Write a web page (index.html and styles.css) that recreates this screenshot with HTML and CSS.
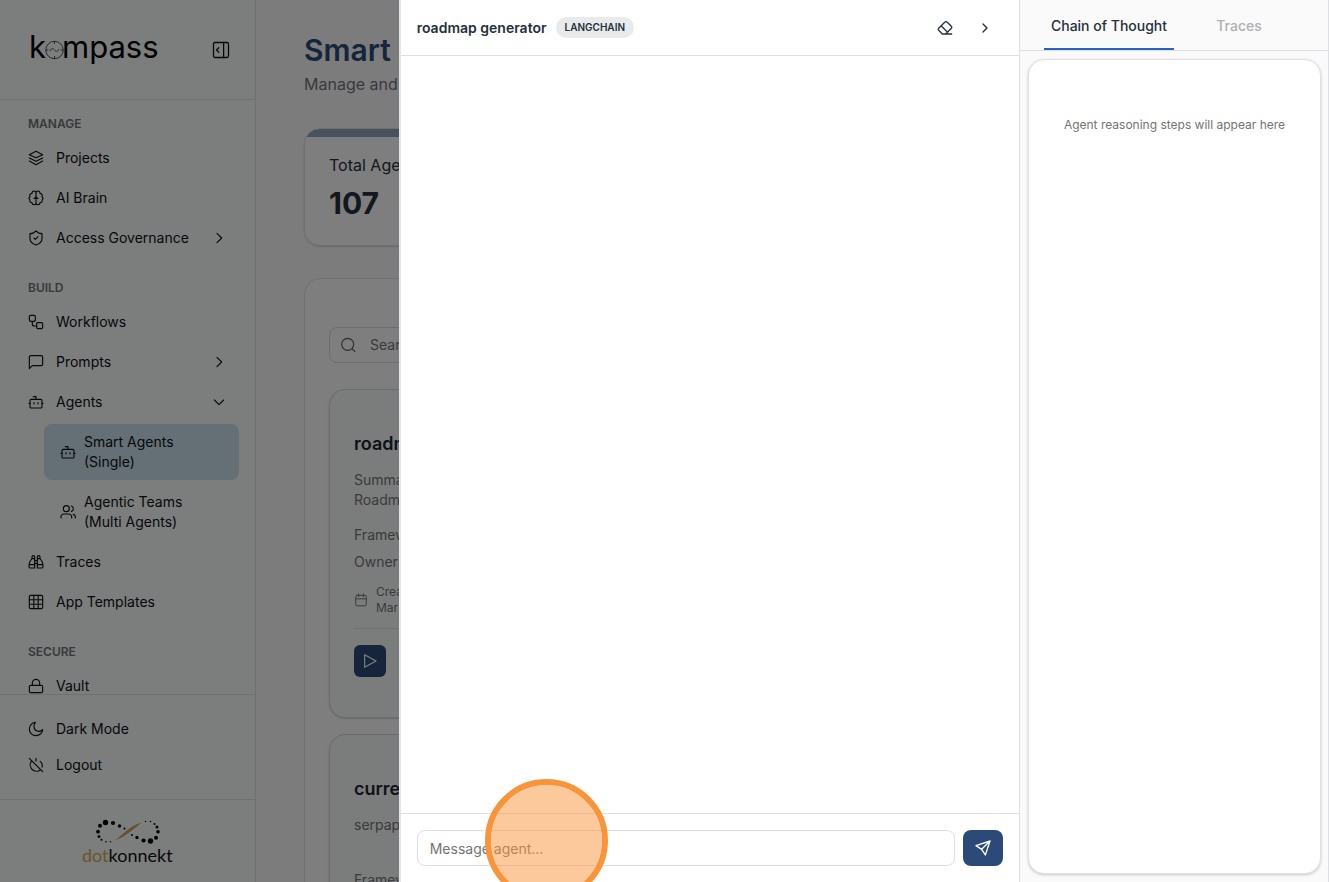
FILE: index.html
```html
<!DOCTYPE html>
<html lang="en">
<head>
<meta charset="utf-8">
<meta name="viewport" content="width=device-width, initial-scale=1">
<title>Kompass – Smart Agents</title>
<link rel="stylesheet" href="styles.css">
</head>
<body>
<div class="app">
  <aside class="sidebar">
    <header class="brand">
      <svg class="brand-logo" width="134" height="44" viewBox="0 0 134 44" role="img" aria-label="kompass">
        <text class="brand-text" x="1" y="30">k</text>
        <text class="brand-text" x="34" y="30">mpass</text>
        <g class="compass">
          <circle cx="26.500" cy="22" r="8.700"/>
          <path d="M26.500 13v3M26.500 28v3M17.500 22h3M32.500 22h3M22 23c1-3 3-3 4.500-1s3 2 4.500-1"/>
        </g>
      </svg>
      <button class="icon-btn collapse" aria-label="Collapse sidebar">
        <svg class="icon icon-lg" viewBox="0 0 24 24"><rect x="2" y="2" width="20" height="20" rx="2"/><path d="M15.500 2v20M9 9l-3 3 3 3"/></svg>
      </button>
    </header>
    <nav class="nav">
      <section class="group">
        <h2 class="group-title">MANAGE</h2>
        <a class="item" href="#"><svg class="icon" viewBox="0 0 24 24"><path d="M12 2 22 7 12 11.500 2 7zM2 12l10 5 10-5M2 16.500l10 5.500 10-5.500"/></svg>Projects</a>
        <a class="item" href="#"><svg class="icon" viewBox="0 0 24 24"><path d="M12 4.500v15M12 4.500C12 .5 6 .5 6 5c-3 .5-4 3-3 5-2 1-2 4 0 5-1 3 1 4 3 4 0 4 6 4 6 .5M12 4.500C12 .5 18 .5 18 5c3 .5 4 3 3 5 2 1 2 4 0 5 1 3-1 4-3 4 0 4-6 4-6 .5M9 12.500c2 0 3-1 3-3M15 12.500c-2 0-3-1-3-3"/></svg>AI Brain</a>
        <a class="item" href="#"><svg class="icon" viewBox="0 0 24 24"><path d="M21 13c0 5-3.500 7.500-9 9.500C6.500 20.500 3 18 3 13V5.500c4 0 6.500-1.500 9-4 2.500 2.500 5 4 9 4zM9 12l2 2 4-4"/></svg>Access Governance<svg class="icon chevron" viewBox="0 0 24 24"><path d="m9 5 7 7-7 7"/></svg></a>
      </section>
      <section class="group">
        <h2 class="group-title">BUILD</h2>
        <a class="item" href="#"><svg class="icon" viewBox="0 0 24 24"><rect x="2" y="2" width="9" height="9" rx="2"/><rect x="13" y="13" width="9" height="9" rx="2"/><path d="M6.500 11v4c0 2 1 3 3 3H13"/></svg>Workflows</a>
        <a class="item" href="#"><svg class="icon" viewBox="0 0 24 24"><path d="M22 15.500a2 2 0 0 1-2 2H6.500L2 22V4.500a2 2 0 0 1 2-2h16a2 2 0 0 1 2 2z"/></svg>Prompts<svg class="icon chevron" viewBox="0 0 24 24"><path d="m9 5 7 7-7 7"/></svg></a>
        <a class="item" href="#"><svg class="icon" viewBox="0 0 24 24"><path d="M12 8V4H8M3 14H1.500M22.500 14H21M9 13v2M15 13v2"/><rect x="3" y="8" width="18" height="13" rx="2"/></svg>Agents<svg class="icon chevron" viewBox="0 0 24 24"><path d="m5 9 7 7 7-7"/></svg></a>
        <div class="subnav">
          <a class="item sub active" href="#"><svg class="icon" viewBox="0 0 24 24"><path d="M12 8V4H8M3 14H1.500M22.500 14H21M9 13v2M15 13v2"/><rect x="3" y="8" width="18" height="13" rx="2"/></svg><span>Smart Agents (Single)</span></a>
          <a class="item sub" href="#"><svg class="icon" viewBox="0 0 24 24"><circle cx="9.500" cy="7" r="4.500"/><path d="M1.500 21v-1.500c0-3 2-4.500 5-4.500h6c3 0 5 1.500 5 4.500V21M17 3c4 1 4 7 0 8M20 15.500c2 .5 3 2 3 4V21"/></svg><span>Agentic Teams (Multi Agents)</span></a>
        </div>
        <a class="item" href="#"><svg class="icon" viewBox="0 0 24 24"><path d="M10 10h4M10 14h4M10 21V4.500a2 2 0 0 0-4 0V7c-3 3-4.500 7-4.500 12a2 2 0 0 0 2 2zM14 21V4.500a2 2 0 0 1 4 0V7c3 3 4.500 7 4.500 12a2 2 0 0 1-2 2zM1.500 16H10M14 16h8.500M6 7h4M14 7h4"/></svg>Traces</a>
        <a class="item" href="#"><svg class="icon" viewBox="0 0 24 24"><rect x="2" y="2" width="20" height="20" rx="2"/><path d="M2 8.700h20M2 15.300h20M8.700 2v20M15.300 2v20"/></svg>App Templates</a>
      </section>
      <section class="group">
        <h2 class="group-title">SECURE</h2>
        <a class="item" href="#"><svg class="icon" viewBox="0 0 24 24"><rect x="2" y="11" width="20" height="11" rx="2"/><path d="M6.500 11V7.500a5.500 5.500 0 0 1 11 0V11"/></svg>Vault</a>
      </section>
    </nav>
    <div class="account">
      <button class="item"><svg class="icon" viewBox="0 0 24 24"><path d="M11 2C5.500 2.500 2 7 2 12c0 6 4.500 10 10 10 5 0 9.500-3.500 10-9-1.500 2-3.500 2.500-5 2.500-5 0-8-3-8-7.500 0-2.500 1-4.500 2-6z"/></svg>Dark Mode</button>
      <button class="item"><svg class="icon" viewBox="0 0 24 24"><path d="M18.400 6.600a9 9 0 0 1 2.800 8.500M12 2v4M2 2l20 20M5 6.500A9.500 9.500 0 0 0 18.500 19.500"/></svg>Logout</button>
    </div>
    <footer class="vendor">
      <svg width="94" height="48" viewBox="0 0 94 48" role="img" aria-label="dotkonnekt">
        <g fill="#000">
          <circle cx="24.500" cy="6.500" r="2.700"/><circle cx="32" cy="7" r="2.100"/><circle cx="38.500" cy="10" r="1.700"/><circle cx="43.500" cy="12.500" r="1"/>
          <circle cx="19" cy="9.700" r="2"/><circle cx="17" cy="15.700" r="1.900"/><circle cx="18" cy="20.500" r="1.500"/><circle cx="20.500" cy="23.700" r="1"/><circle cx="25" cy="25.700" r=".8"/><circle cx="29.500" cy="25.700" r=".7"/>
          <circle cx="51" cy="19" r="1"/><circle cx="56" cy="21.500" r="1.700"/><circle cx="62.500" cy="24.500" r="2.100"/><circle cx="69.500" cy="25" r="2.700"/><circle cx="75" cy="21.800" r="2"/><circle cx="77" cy="15.700" r="1.800"/><circle cx="76" cy="11" r="1.500"/><circle cx="73.500" cy="8" r="1"/><circle cx="69.500" cy="5.500" r=".8"/><circle cx="64.500" cy="5.500" r=".7"/>
        </g>
        <path d="M34 24.500C42 18.500 49 9.500 60.500 6.500 55 11 45 20.500 34 24.500z" fill="#d2a04c"/>
        <text class="vendor-text" x="1" y="46"><tspan fill="#d5aa49">dot</tspan><tspan fill="#111">konnekt</tspan></text>
      </svg>
    </footer>
  </aside>

  <main class="main">
    <h1 class="page-title">Smart Agents</h1>
    <p class="page-sub">Manage and</p>
    <section class="stat">
      <p class="stat-label">Total Agents</p>
      <p class="stat-value">107</p>
    </section>
    <section class="panel">
      <label class="search">
        <svg class="icon" viewBox="0 0 24 24"><circle cx="11.500" cy="11" r="9"/><path d="m18.500 18 4 4"/></svg>
        <input type="search" placeholder="Search" aria-label="Search agents">
      </label>
      <div class="cards">
        <article class="card">
          <h3 class="card-title">roadmap generator</h3>
          <p class="card-desc">Summary<br>Roadmap</p>
          <p class="card-meta">Framework:</p>
          <p class="card-meta">Owner:</p>
          <div class="card-date"><svg class="icon" viewBox="0 0 24 24"><rect x="3" y="4" width="18" height="18" rx="2"/><path d="M8 1.500v5M16 1.500v5M3 10h18"/></svg><span>Created<br>Mar</span></div>
          <div class="card-actions"><button class="play" aria-label="Run agent"><svg class="icon" viewBox="0 0 24 24"><path d="M4 2.500v19L21 12z"/></svg></button></div>
        </article>
        <article class="card">
          <h3 class="card-title">current</h3>
          <p class="card-desc">serpapi</p>
          <p class="card-meta">Framework:</p>
        </article>
      </div>
    </section>
  </main>
</div>

<div class="scrim"></div>

<div class="drawer" role="dialog" aria-label="roadmap generator">
  <section class="chat">
    <header class="chat-head">
      <h2 class="chat-title">roadmap generator</h2>
      <span class="badge">LANGCHAIN</span>
      <div class="chat-tools">
        <button class="icon-btn" aria-label="Clear chat"><svg class="icon" viewBox="0 0 24 24"><path d="M8 21 2.500 15.500a2 2 0 0 1 0-3L12 3a2 2 0 0 1 3 0l6.500 6.500a2 2 0 0 1 0 3L13 21M22 21H8M6.500 9l9 9"/></svg></button>
        <button class="icon-btn" aria-label="Collapse panel"><svg class="icon" viewBox="0 0 24 24"><path d="m9 6 6 6-6 6"/></svg></button>
      </div>
    </header>
    <div class="messages"></div>
    <form class="composer">
      <input class="message" type="text" placeholder="Message agent..." aria-label="Message agent">
      <button class="send" type="button" aria-label="Send"><svg class="icon" viewBox="0 0 24 24"><path d="M22.500 1.500 1.500 8.500l8.500 5.500 5.500 8.500zM22.500 1.500 10 14"/></svg></button>
    </form>
  </section>
  <aside class="thoughts">
    <div class="tabs" role="tablist">
      <button class="tab selected" role="tab" aria-selected="true">Chain of Thought</button>
      <button class="tab" role="tab" aria-selected="false">Traces</button>
    </div>
    <div class="thoughts-body"><div class="steps">Agent reasoning steps will appear here</div></div>
  </aside>
</div>
<div class="click-marker"></div>
</body>
</html>
```
FILE: styles.css
```css
* { box-sizing: border-box; }
body, h1, h2, h3, p { margin: 0; }
html, body { height: 100%; }
body {
  font: 14px/20px Inter, "Liberation Sans", sans-serif;
  color: #0c1013;
  overflow: hidden;
}
button, input { font: inherit; color: inherit; }
button { border: 0; background: none; padding: 0; cursor: pointer; }
a { color: inherit; text-decoration: none; }

.icon {
  width: 16px;
  height: 16px;
  flex: none;
  fill: none;
  stroke: currentColor;
  stroke-width: 1.7;
  stroke-linecap: round;
  stroke-linejoin: round;
}
.icon-lg { width: 18px; height: 18px; }
.icon-btn { display: grid; place-items: center; width: 32px; height: 32px; }

.app { display: flex; height: 100vh; background: #fff; }

.sidebar {
  display: flex;
  flex-direction: column;
  width: 256px;
  flex: none;
  background: #f8fbfa;
  border-right: 1px solid #dce2e4;
}
.brand {
  display: flex;
  align-items: center;
  justify-content: space-between;
  height: 100px;
  flex: none;
  padding: 0 18px 0 28px;
  border-bottom: 1px solid #dce2e4;
}
.brand-text { font-size: 31px; fill: #000; }
.compass { fill: none; stroke: #555; stroke-width: 1; }

.nav {
  flex: 1;
  min-height: 0;
  overflow: hidden;
  display: flex;
  flex-direction: column;
  gap: 24px;
  padding: 16px;
}
.group { display: flex; flex-direction: column; gap: 4px; flex: none; }
.group-title {
  padding: 0 12px 4px;
  font-size: 12px;
  line-height: 16px;
  font-weight: 600;
  color: #6f7376;
}
.item {
  display: flex;
  align-items: center;
  gap: 12px;
  width: 100%;
  padding: 8px 12px;
  border-radius: 8px;
  text-align: left;
}
.chevron { margin-left: auto; }
.subnav { display: flex; flex-direction: column; gap: 4px; margin-left: 28px; }
.sub { gap: 8px; padding: 8px 48px 8px 16px; }
.active { background: #c8e0eb; }
.account {
  flex: none;
  padding: 16px;
  border-top: 1px solid #dce2e4;
  border-bottom: 1px solid #dce2e4;
}
.vendor { flex: none; display: flex; justify-content: center; padding: 16px 0 18px; }
.vendor-text { font-size: 18px; font-family: Lato, sans-serif; }

.main { flex: 1; min-width: 0; overflow: hidden; padding: 32px 48px; background: #f9f9f9; }
.page-title { font-size: 30px; line-height: 36px; font-weight: 600; color: #2c4a77; }
.page-sub { margin-top: 4px; font-size: 16px; line-height: 24px; color: #70757a; }
.stat {
  margin-top: 32px;
  padding: 24px;
  overflow: hidden;
  border: 1px solid #dadfe2;
  border-radius: 16px;
  background: linear-gradient(#94a3bd 8px, #fdfdfd 8px);
  box-shadow: 0 1px 2px rgba(0, 0, 0, .15);
}
.stat-label { font-size: 16px; line-height: 24px; color: #25303a; }
.stat-value { margin-top: 8px; font-size: 30px; line-height: 36px; font-weight: 700; color: #25303a; }
.panel {
  margin-top: 32px;
  padding: 48px 24px;
  border: 1px solid #dadfe2;
  border-radius: 16px;
  background: #fcfcfc;
}
.search {
  display: flex;
  align-items: center;
  gap: 12px;
  width: 400px;
  height: 36px;
  padding: 0 10px;
  border: 1px solid #d5dadd;
  border-radius: 8px;
  color: #555b60;
}
.search input { flex: 1; min-width: 0; border: 0; outline: 0; background: none; }
.search input::placeholder { color: #70757a; }
.cards { display: grid; gap: 16px; margin-top: 26px; width: 400px; }
.card {
  min-height: 329px;
  padding: 40px 24px;
  border: 1px solid #d3d8db;
  border-radius: 16px;
  background: #f7faf9;
  box-shadow: 0 1px 2px rgba(0, 0, 0, .15);
  color: #70757a;
}
.card-title { font-size: 18px; line-height: 28px; font-weight: 600; color: #1d2530; }
.card-desc { min-height: 40px; margin: 12px 0 15px; }
.card-meta { margin-bottom: 7px; }
.card-date { display: flex; align-items: center; gap: 8px; margin-top: 12px; font-size: 12px; line-height: 16px; }
.card-date .icon { width: 14px; height: 14px; }
.card-actions { margin-top: 12px; padding-top: 16px; border-top: 1px solid #dadfe2; }
.play { display: grid; place-items: center; width: 32px; height: 32px; border-radius: 6px; background: #2c4a77; color: #fff; }

.scrim { position: fixed; inset: 0; background: rgba(0, 0, 0, .5); }
.drawer {
  position: fixed;
  inset: 0 0 0 auto;
  display: flex;
  width: 70%;
  background: #fff;
  border-left: 2px solid #e2e6ea;
  color: #25303a;
}
.chat { display: flex; flex-direction: column; flex: 1; min-width: 0; }
.chat-head {
  display: flex;
  align-items: center;
  gap: 9px;
  height: 56px;
  padding: 0 18px 0 16px;
  border-bottom: 1px solid #dcdfe4;
}
.chat-title { font-size: 14px; line-height: 20px; font-weight: 600; }
.badge {
  padding: 2px 9px 3px;
  border-radius: 12px;
  background: #e8eaec;
  font-size: 10px;
  line-height: 16px;
  font-weight: 600;
}
.chat-tools { display: flex; gap: 8px; margin-left: auto; }
.chat-tools .icon, .send .icon { stroke-width: 2; }
.messages { flex: 1; }
.composer { display: flex; gap: 8px; padding: 16px; border-top: 1px solid #dcdfe4; }
.message {
  flex: 1;
  min-width: 0;
  height: 36px;
  padding: 0 12px;
  border: 1px solid #dcdfe6;
  border-radius: 8px;
  outline: 0;
  background: #fff;
}
.message::placeholder { color: #737373; opacity: 1; }
.send { display: grid; place-items: center; width: 40px; height: 36px; border-radius: 8px; background: #2c4a77; color: #fff; }

.thoughts {
  display: flex;
  flex-direction: column;
  flex: none;
  width: 310px;
  border: solid #dcdfe4;
  border-width: 0 1px;
  background: #fafafb;
}
.tabs { display: flex; height: 51px; padding: 0 24px; border-bottom: 1px solid #dcdfe4; }
.tab { flex: 1; padding-top: 4px; border-bottom: 2px solid transparent; color: #b0b0b0; font-weight: 500; white-space: nowrap; }
.tab.selected { border-color: #2563c4; color: #25303a; }
.thoughts-body { flex: 1; display: flex; padding: 8px 7px 8px 8px; }
.steps {
  flex: 1;
  padding-top: 56px;
  border: 1px solid #dfe1e4;
  border-radius: 16px;
  background: #fff;
  box-shadow: 0 1px 3px rgba(0, 0, 0, .2);
  font-size: 12px;
  line-height: 18px;
  text-align: center;
  color: #737373;
}
.click-marker {
  position: fixed;
  left: 485px;
  top: 779px;
  width: 123px;
  height: 123px;
  border: 6px solid #f9943b;
  border-radius: 50%;
  background: rgba(249, 148, 59, .5);
  background-clip: padding-box;
  pointer-events: none;
}
```
